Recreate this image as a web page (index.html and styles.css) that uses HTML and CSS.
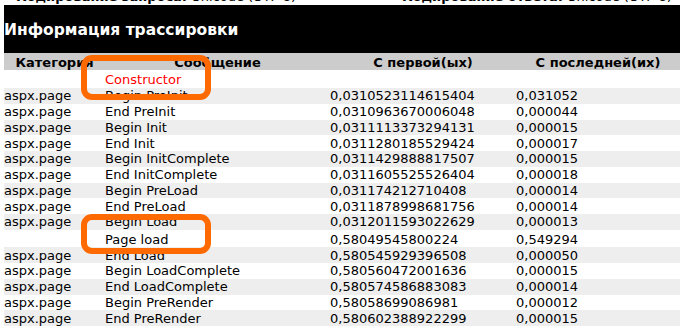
FILE: index.html
```html
<!DOCTYPE html>
<html lang="ru">
<head>
<meta charset="utf-8">
<title>Информация трассировки</title>
<link rel="stylesheet" href="styles.css">
</head>
<body>
<div class="page">
  <div class="info">
    <span><b>Кодирование запроса:</b> Unicode (UTF-8)</span>
    <span><b>Кодирование ответа:</b> Unicode (UTF-8)</span>
  </div>
  <table class="trace">
    <colgroup>
      <col class="c-cat"><col class="c-msg"><col class="c-first"><col class="c-last">
    </colgroup>
    <thead>
      <tr class="title"><th colspan="4">Информация трассировки</th></tr>
      <tr class="cols"><th>Категория</th><th>Сообщение</th><th>С первой(ых)</th><th>С последней(их)</th></tr>
    </thead>
    <tbody>
      <tr class="first"><td></td><td class="warn">Constructor</td><td></td><td></td></tr>
      <tr class="alt"><td>aspx.page</td><td>Begin PreInit</td><td>0,0310523114615404</td><td>0,031052</td></tr>
      <tr><td>aspx.page</td><td>End PreInit</td><td>0,0310963670006048</td><td>0,000044</td></tr>
      <tr class="alt"><td>aspx.page</td><td>Begin Init</td><td>0,0311113373294131</td><td>0,000015</td></tr>
      <tr><td>aspx.page</td><td>End Init</td><td>0,0311280185529424</td><td>0,000017</td></tr>
      <tr class="alt"><td>aspx.page</td><td>Begin InitComplete</td><td>0,0311429888817507</td><td>0,000015</td></tr>
      <tr><td>aspx.page</td><td>End InitComplete</td><td>0,0311605525526404</td><td>0,000018</td></tr>
      <tr class="alt"><td>aspx.page</td><td>Begin PreLoad</td><td>0,031174212710408</td><td>0,000014</td></tr>
      <tr><td>aspx.page</td><td>End PreLoad</td><td>0,0311878998681756</td><td>0,000014</td></tr>
      <tr class="alt"><td>aspx.page</td><td>Begin Load</td><td>0,0312011593022629</td><td>0,000013</td></tr>
      <tr class="user"><td></td><td>Page load</td><td>0,58049545800224</td><td>0,549294</td></tr>
      <tr class="alt"><td>aspx.page</td><td>End Load</td><td>0,580545929396508</td><td>0,000050</td></tr>
      <tr><td>aspx.page</td><td>Begin LoadComplete</td><td>0,580560472001636</td><td>0,000015</td></tr>
      <tr class="alt"><td>aspx.page</td><td>End LoadComplete</td><td>0,580574586883083</td><td>0,000014</td></tr>
      <tr><td>aspx.page</td><td>Begin PreRender</td><td>0,58058699086981</td><td>0,000012</td></tr>
      <tr class="alt"><td>aspx.page</td><td>End PreRender</td><td>0,580602388922299</td><td>0,000015</td></tr>
    </tbody>
  </table>
  <div class="mark mark-ctor"></div>
  <div class="mark mark-load"></div>
</div>
</body>
</html>
```
FILE: styles.css
```css
html, body {
  margin: 0;
  padding: 0;
  background: #ffffff;
  overflow: hidden;
}
body {
  font-family: "DejaVu Sans", Verdana, sans-serif;
  font-size: 13px;
  color: #000000;
}
.page {
  position: relative;
  display: flow-root;
  padding-left: 4px;
  width: 676px;
}
.info {
  display: grid;
  grid-template-columns: 386px auto;
  padding-left: 12px;
  margin-top: -11px;
  height: 16px;
  line-height: 16px;
}
.trace {
  width: 676px;
  table-layout: fixed;
  border-collapse: collapse;
  border-spacing: 0;
}
.c-cat { width: 101px; }
.c-msg { width: 225px; }
.c-first { width: 186px; }
.c-last { width: 164px; }
.trace th, .trace td {
  padding: 0;
  white-space: nowrap;
  overflow: hidden;
  line-height: 15px;
}
.trace tbody td { text-align: left; height: 15.75px; }
.title th {
  background: #000000;
  color: #ffffff;
  text-align: left;
  font-size: 15.5px;
  font-weight: bold;
  height: 48px;
  padding-top: 2px;
  box-sizing: border-box;
  vertical-align: middle;
}
.cols th {
  background: #cccccc;
  text-align: center;
  font-weight: bold;
  height: 17px;
  padding-top: 2px;
  box-sizing: border-box;
}
.trace tr.first td { height: 18px; }
.trace tr.user td { height: 17.5px; vertical-align: bottom; }
.trace tr.alt td { background: #eeeeee; }
.warn { color: #ff0000; }
.mark {
  position: absolute;
  left: 81px;
  width: 118px;
  border: 6px solid #ff6a00;
  border-radius: 11px;
}
.mark-ctor { top: 55px; height: 33px; }
.mark-load { top: 214px; height: 28px; }
```
